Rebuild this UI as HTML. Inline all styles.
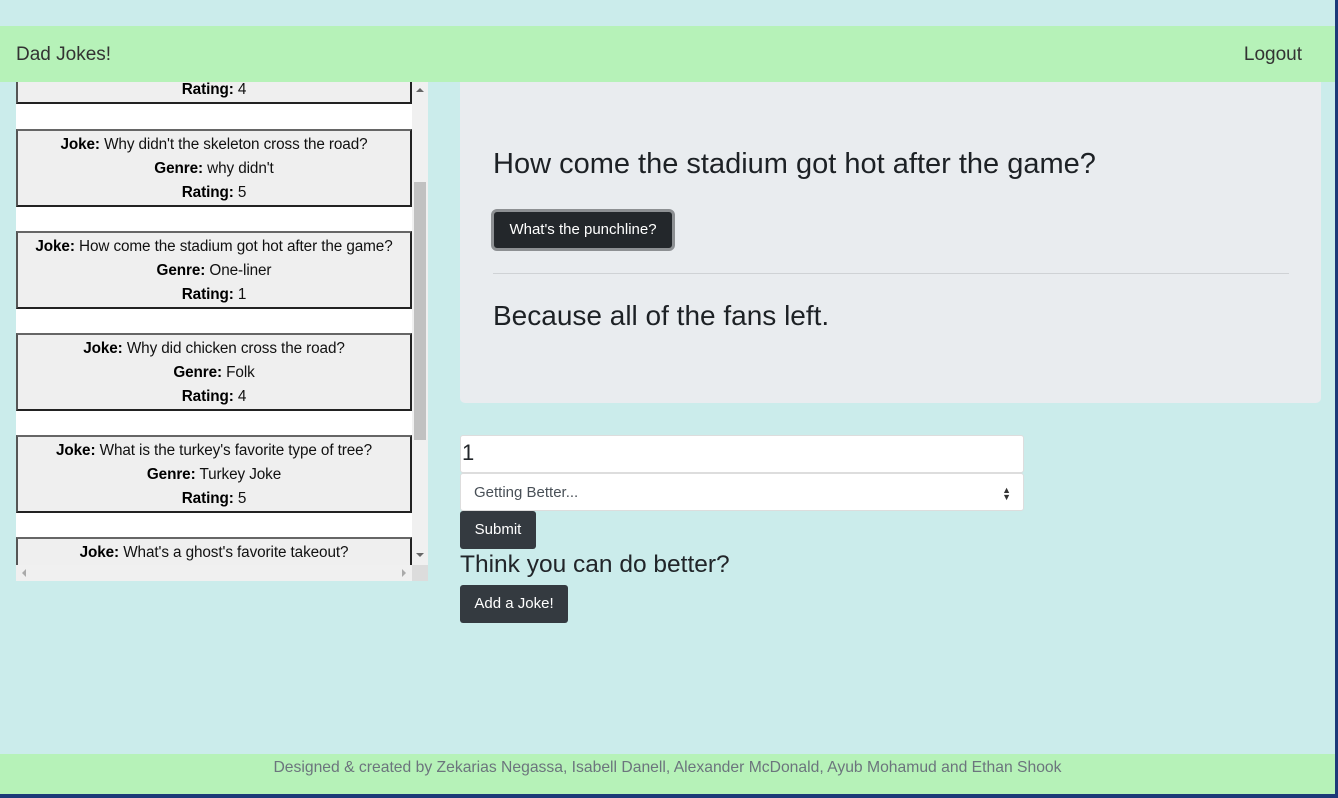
<!DOCTYPE html>
<html><head><meta charset="utf-8"><style>
*{box-sizing:border-box;margin:0;padding:0}
body{width:1338px;height:798px;overflow:hidden;background:#cbeceb;font-family:"Liberation Sans",sans-serif;color:#212529;position:relative}
.edgeR{position:absolute;right:0;top:0;width:3px;height:798px;background:#1c3a78}
.edgeB{position:absolute;left:0;bottom:0;width:1338px;height:4px;background:#1c3a78}
.nav{position:absolute;left:0;top:26px;width:1335px;height:56px;background:#b6f2b8;font-size:19px;color:#333}
.nav .b{position:absolute;left:16px;top:18px}
.nav .l{position:absolute;right:33px;top:18px}
.list{position:absolute;left:16px;top:82px;width:412px;height:499px;background:#fff;overflow:hidden}
.card{position:absolute;left:0;width:396px;height:78px;background:#efefef;border:2px solid #222;border-top-color:#666;border-left-color:#555;text-align:center;font-size:15.3px;line-height:24px;padding-top:2px;color:#111;white-space:nowrap;letter-spacing:-0.1px}
.card b{color:#000}
.vs{position:absolute;left:396px;top:0;width:16px;height:483px;background:#f0f0f0}
.thumb{position:absolute;left:398px;top:100px;width:12px;height:258px;background:#c1c1c1}
.hs{position:absolute;left:0;top:483px;width:396px;height:16px;background:#f0f0f0}
.corner{position:absolute;left:396px;top:483px;width:16px;height:16px;background:#dcdcdc}
.arr{position:absolute;width:0;height:0;border:4px solid transparent}
.jumbo{position:absolute;left:460px;top:82px;width:861px;height:321px;background:#e9ecef;border-radius:0 0 5px 5px}
.jumbo h2{position:absolute;left:33px;top:66px;font-size:29px;font-weight:500;color:#1d2125}
.pbtn{position:absolute;left:31px;top:127px;width:184px;height:42px;background:#23272b;border:3px solid #8d9093;border-radius:6px;color:#fff;font-size:15px;line-height:36px;text-align:center}
.hr{position:absolute;left:33px;top:191px;width:796px;height:1px;background:#cfd2d5}
.jumbo h3{position:absolute;left:33px;top:218px;font-size:28px;font-weight:500;color:#1d2125}
.inp{position:absolute;left:460px;top:435px;width:564px;height:38px;background:#fff;border:1px solid #ddd;border-radius:3px;font-size:22px;line-height:34px;padding-left:1px}
.sel{position:absolute;left:460px;top:473px;width:564px;height:38px;background:#fff;border:1px solid #ddd;border-radius:3px;font-size:15px;line-height:38px;padding-left:13px;color:#495057}
.sel span{position:absolute;right:12px;font-size:9px;color:#333;line-height:7px}
.btn{position:absolute;background:#343a40;color:#fff;border-radius:3px;font-size:15px;text-align:center}
.think{position:absolute;left:460px;top:551px;font-size:24.5px;font-weight:500}
.foot{position:absolute;left:0;top:754px;width:1335px;height:40px;background:#b6f2b8;text-align:center;color:#6c757d;font-size:15.7px;line-height:27px}
</style></head><body>
<div class="nav"><span class="b">Dad Jokes!</span><span class="l">Logout</span></div>
<div class="list">
 <div class="card" style="top:-56px"><b>Joke:</b> x<br><b>Genre:</b> x<br><b>Rating:</b> 4</div>
 <div class="card" style="top:47px"><b>Joke:</b> Why didn't the skeleton cross the road?<br><b>Genre:</b> why didn't<br><b>Rating:</b> 5</div>
 <div class="card" style="top:149px"><b>Joke:</b> How come the stadium got hot after the game?<br><b>Genre:</b> One-liner<br><b>Rating:</b> 1</div>
 <div class="card" style="top:251px"><b>Joke:</b> Why did chicken cross the road?<br><b>Genre:</b> Folk<br><b>Rating:</b> 4</div>
 <div class="card" style="top:353px"><b>Joke:</b> What is the turkey's favorite type of tree?<br><b>Genre:</b> Turkey Joke<br><b>Rating:</b> 5</div>
 <div class="card" style="top:455px"><b>Joke:</b> What's a ghost's favorite takeout?<br><b>Genre:</b> x<br><b>Rating:</b> 3</div>
 <div class="vs"></div><div class="thumb"></div><div class="hs"></div><div class="corner"></div>
 <div class="arr" style="left:400px;top:2px;border-bottom-color:#666"></div>
 <div class="arr" style="left:400px;top:471px;border-top-color:#666"></div>
 <div class="arr" style="left:2px;top:487px;border-right-color:#aaa"></div>
 <div class="arr" style="left:386px;top:487px;border-left-color:#aaa"></div>
</div>
<div class="jumbo">
 <h2>How come the stadium got hot after the game?</h2>
 <div class="pbtn">What's the punchline?</div>
 <div class="hr"></div>
 <h3>Because all of the fans left.</h3>
</div>
<div class="inp">1</div>
<div class="sel">Getting Better...<span style="top:13px">▲<br>▼</span></div>
<div class="btn" style="left:460px;top:511px;width:76px;height:38px;line-height:38px">Submit</div>
<div class="think">Think you can do better?</div>
<div class="btn" style="left:460px;top:585px;width:108px;height:38px;line-height:38px">Add a Joke!</div>
<div class="foot">Designed &amp; created by Zekarias Negassa, Isabell Danell, Alexander McDonald, Ayub Mohamud and Ethan Shook</div>
<div class="edgeR"></div><div class="edgeB"></div>
</body></html>
